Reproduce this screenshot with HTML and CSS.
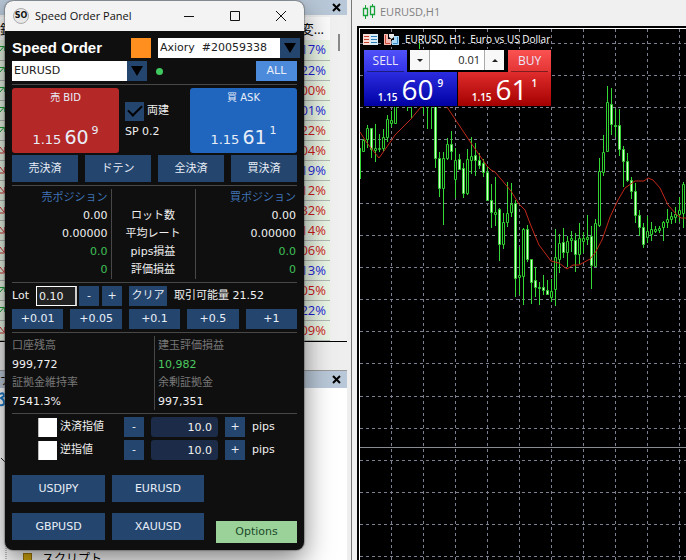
FILE: index.html
```
<!DOCTYPE html>
<html lang="ja">
<head>
<meta charset="utf-8">
<title>Speed Order Panel</title>
<link rel="stylesheet" href="styles.css">
</head>
<body>
<aside class="dock">
  <div class="dock-bar"><span></span><button class="dock-close" aria-label="閉じる"><svg width="9" height="9" viewBox="0 0 9 9"><path d="M1 1L8 8M8 1L1 8"/></svg></button></div>
  <div class="watch">
    <table class="quotes">
      <thead><tr><th class="sym">銘</th><th>変...</th></tr></thead>
      <tbody id="quotes"></tbody>
    </table>
    <div class="scroll"><i></i></div>
  </div>
  <div class="dock-gap"></div>
  <div class="dock-bar nav-bar"><span>ナ</span><button class="dock-close" aria-label="閉じる"><svg width="9" height="9" viewBox="0 0 9 9"><path d="M1 1L8 8M8 1L1 8"/></svg></button></div>
  <div class="tree">
    <svg class="tree-icon" width="5" height="16" viewBox="0 0 5 16"><path d="M0 3Q4 1 4 5L1 7Q5 9 4 13Q2 15 0 14" fill="none" stroke="#1878c8" stroke-width="2"/></svg>
    <svg class="tree-lines" width="8" height="150" viewBox="0 0 8 150"><path d="M1 46L5 50" stroke="#222" fill="none"/><path d="M6 88V150" stroke="#888" stroke-dasharray="1 1" fill="none"/></svg>
    <div class="tree-item"><span class="folder"></span>スクリプト</div>
  </div>
</aside>

<main class="chart-window">
  <header class="chart-title">
    <svg width="14" height="16" viewBox="0 0 14 16" fill="none" stroke="#17a33a"><path d="M3.500 1V4M3.500 12V15M10.500 0V2M10.500 11V14"/><path d="M1.500 4.500H5.500V11.500H1.500ZM8.500 2.500H12.500V10.500H8.500Z" stroke-width="1.300"/></svg>
    <span>EURUSD,H1</span>
  </header>
  <section class="chart">
    <svg class="plot" id="plot" width="100%" height="100%" aria-label="EURUSD H1"></svg>
    <div class="overlay">
      <div class="caption">
        <svg width="15" height="11" viewBox="0 0 15 11"><rect width="7" height="11" fill="#f7dcd5"/><rect x="7" width="8" height="11" fill="#d8ecf8"/><path d="M1 2.500H6M1 5.500H6M1 8.500H6" stroke="#c4402c"/><path d="M8 2.500H14M8 5.500H14M8 8.500H14" stroke="#2a7ab8"/></svg>
        <svg width="15" height="11" viewBox="0 0 15 11"><path d="M0 0H4V5H7V11H0Z" fill="#f4b8ae"/><path d="M1.500 1V9.500H6" stroke="#d04a3a" fill="none"/><path d="M10 2H15V11H8V6H10Z" fill="#a8d8f4"/><path d="M5 0H10V3L7.500 5L5 3Z" fill="#e8e8e8"/><path d="M13.500 3V9.500H9" stroke="#3a8ac8" fill="none"/></svg>
        <span>EURUSD, H1:&nbsp; Euro vs US Dollar</span>
      </div>
      <form class="trade">
        <button type="button" class="tab sell-tab">SELL</button>
        <div class="spin">
          <button type="button" aria-label="減らす"><i class="down"></i></button>
          <input type="text" value="0.01" aria-label="ロット">
          <button type="button" aria-label="増やす"><i class="up"></i></button>
        </div>
        <button type="button" class="tab buy-tab">BUY</button>
        <button type="button" class="quote sell-quote"><small>1.15</small><b>60</b><sup>9</sup></button>
        <button type="button" class="quote buy-quote"><small>1.15</small><b>61</b><sup>1</sup></button>
      </form>
    </div>
  </section>
</main>

<section class="window">
  <header class="titlebar">
    <span class="logo">SO</span>
    <h1>Speed Order Panel</h1>
    <button aria-label="最小化"><svg width="10" height="10" viewBox="0 0 10 10"><path d="M0 5.500H10"/></svg></button>
    <button aria-label="最大化"><svg width="10" height="10" viewBox="0 0 10 10"><path d="M.5 .5H9.500V9.500H.5Z"/></svg></button>
    <button aria-label="閉じる"><svg width="10" height="10" viewBox="0 0 10 10"><path d="M0 0L10 10M10 0L0 10"/></svg></button>
  </header>
  <form class="panel">
    <div class="row head">
      <h2>Speed Order</h2>
      <span class="swatch"></span>
      <div class="combo account"><select aria-label="口座"><option>Axiory &nbsp;#20059338</option></select></div>
    </div>
    <div class="row symbol-row">
      <div class="combo symbol"><select aria-label="通貨ペア"><option>EURUSD</option></select></div>
      <span class="dot"></span>
      <button type="button" class="all">ALL</button>
    </div>
    <hr>
    <div class="deal">
      <button type="button" class="price bid"><span>売 BID</span><span class="num"><small>1.15</small><b>60</b><sup>9</sup></span></button>
      <div class="deal-mid">
        <label><input type="checkbox" class="hedge" checked>両建</label>
        <span>SP 0.2</span>
      </div>
      <button type="button" class="price ask"><span>買 ASK</span><span class="num"><small>1.15</small><b>61</b><sup>1</sup></span></button>
    </div>
    <div class="grid4">
      <button type="button">売決済</button><button type="button">ドテン</button><button type="button">全決済</button><button type="button">買決済</button>
    </div>
    <hr>
    <table class="positions">
      <tr><th>売ポジション</th><td></td><th>買ポジション</th></tr>
      <tr><td>0.00</td><td>ロット数</td><td>0.00</td></tr>
      <tr><td>0.00000</td><td>平均レート</td><td>0.00000</td></tr>
      <tr class="gain"><td>0.0</td><td>pips損益</td><td>0.0</td></tr>
      <tr class="gain"><td>0</td><td>評価損益</td><td>0</td></tr>
    </table>
    <hr>
    <div class="row lot">
      <label for="lot">Lot</label>
      <input id="lot" type="text" value="0.10">
      <button type="button" class="step">-</button>
      <button type="button" class="step">+</button>
      <button type="button" class="clear">クリア</button>
      <span>取引可能量 21.52</span>
    </div>
    <div class="grid5">
      <button type="button">+0.01</button><button type="button">+0.05</button><button type="button">+0.1</button><button type="button">+0.5</button><button type="button">+1</button>
    </div>
    <hr>
    <div class="balance">
      <dl><dt>口座残高</dt><dd>999,772</dd><dt>証拠金維持率</dt><dd>7541.3%</dd></dl>
      <dl><dt>建玉評価損益</dt><dd class="up-text">10,982</dd><dt>余剰証拠金</dt><dd>997,351</dd></dl>
    </div>
    <hr>
    <div class="limits">
      <div class="row limit">
        <label><input type="checkbox" class="tick">決済指値</label>
        <button type="button" class="step">-</button>
        <input type="text" value="10.0" aria-label="決済指値 pips">
        <button type="button" class="step">+</button>
        <span>pips</span>
      </div>
      <div class="row limit">
        <label><input type="checkbox" class="tick">逆指値</label>
        <button type="button" class="step">-</button>
        <input type="text" value="10.0" aria-label="逆指値 pips">
        <button type="button" class="step">+</button>
        <span>pips</span>
      </div>
    </div>
    <div class="foot">
      <div class="pairs">
        <button type="button">USDJPY</button><button type="button">EURUSD</button>
        <button type="button">GBPUSD</button><button type="button">XAUUSD</button>
      </div>
      <button type="button" class="options">Options</button>
    </div>
  </form>
</section>
<script src="chart.js"></script>
</body>
</html>
```
FILE: styles.css
```
* { box-sizing: border-box; }
body {
  margin: 0;
  min-height: 100vh;
  display: flex;
  position: relative;
  overflow: hidden;
  background: #f0f0f0;
  font: 11px/18px "DejaVu Sans", "Noto Sans CJK JP", sans-serif;
}
button, input, select { font: inherit; color: inherit; margin: 0; padding: 0; border: 0; border-radius: 0; }
button { cursor: pointer; }
h1, h2, dl, dd { margin: 0; }

/* docked panes */
.dock {
  flex: 0 0 352px;
  height: 100vh;
  display: flex;
  flex-direction: column;
  padding-right: 4px;
  border-right: 1px solid #777;
  background: #eee;
  overflow: hidden;
  font: 13px/20px "Open Sans", "Noto Sans CJK JP", sans-serif;
}
.dock-bar {
  flex: none;
  height: 15px;
  display: flex;
  align-items: center;
  justify-content: space-between;
  padding-right: 6px;
  background: #b9c8d8;
}
.nav-bar { height: 18px; border-top: 1px solid #999; }
.dock-close { width: 9px; height: 9px; line-height: 0; background: none; }
.dock-close svg { stroke: #000; stroke-width: 2; display: block; }
.watch { display: flex; border-bottom: 1px solid #000; padding-top: 2px; }
.quotes { flex: 1; border-collapse: collapse; table-layout: fixed; background: #e8f4e4; }
.quotes th { height: 23px; padding: 0 6px 0 0; background: #fafafa; font-weight: 400; text-align: right; }
.quotes th.sym { padding: 0; text-align: left; }
.quotes td { height: 20px; line-height: 19px; padding: 0 4px 0 0; text-align: right; border-bottom: 1px solid #b4b8b4; }
.quotes td:first-child { padding: 0; text-align: left; line-height: 0; }
.quotes .blue { color: #1c1cd8; }
.quotes .red { color: #d01818; }
.scroll { flex: 0 0 17px; padding: 17px 0 0 8px; background: #f0f0f0; }
.scroll i { display: block; width: 2px; height: 17px; background: #888; }
.dock-gap { flex: 0 0 28px; }
.tree { flex: 1; display: flex; flex-direction: column; background: #fff; position: relative; }
.tree-icon { flex: none; margin-top: 3px; }
.tree-lines { position: absolute; left: 0; top: 24px; }
.tree-item { display: flex; align-items: center; gap: 10px; padding: 142px 0 0 23px; font-size: 12px; }
.folder { width: 9px; height: 11px; background: #d8ac10; border: 1px solid #a07808; }

/* chart window */
.chart-window { flex: 1; height: 100vh; min-width: 0; display: flex; flex-direction: column; padding-left: 5px; }
.chart-title {
  flex: 0 0 26px;
  display: flex;
  align-items: center;
  gap: 4px;
  padding: 0 0 2px 5px;
  color: #808080;
  font: 11px/18px "Open Sans", sans-serif;
}
.chart {
  flex: 1;
  position: relative;
  background: #000;
  border: 2px solid #000;
  border-width: 2px 0 0 2px;
  box-shadow: inset 1px 1px 0 #fff;
}
.plot { position: absolute; inset: 0; display: block; }
.overlay { position: absolute; left: 4px; top: 4px; }
.caption { display: flex; align-items: center; gap: 6px; height: 15px; color: #fff; font: 10px/15px "Open Sans", sans-serif; }
.caption svg { flex: none; }
.caption span { white-space: nowrap; }
.trade {
  display: grid;
  grid-template-columns: 43px 49px 49px 43px;
  grid-template-rows: 22px 34px;
  column-gap: 1px;
  margin-top: 2px;
  padding: 1px;
  background: #000;
  color: #fff;
  font-family: "Open Sans", sans-serif;
}
.spin { grid-column: 2 / 4; display: flex; height: 20px; margin: 0 3px 0 2px; background: #fff; color: #222; }
.spin button { width: 19px; background: #f8f8f8; display: grid; place-items: center; }
.spin input { flex: 1; min-width: 0; text-align: right; padding-right: 4px; border: solid #aaa; border-width: 0 1px; font-size: 11px; }
.spin i { border: 3px solid transparent; }
.spin .down { border-top-color: #222; border-bottom: 0; }
.spin .up { border-bottom-color: #222; border-top: 0; }
.tab { color: #e8e8f8; font-size: 12px; line-height: 20px; position: relative; }
.tab::after { content: ""; position: absolute; left: 3px; right: 3px; bottom: 0; height: 1px; background: rgba(0, 0, 0, .45); }
.sell-tab { background: linear-gradient(#5252fa, #3232e8); }
.buy-tab { background: linear-gradient(#fa5252, #e43434); }
.quote { display: flex; align-items: flex-end; justify-content: center; gap: 4px; height: 34px; color: #fff; }
.sell-quote { grid-column: 1 / 3; background: linear-gradient(#2c2ce0, #0000a4); }
.buy-quote { grid-column: 3 / 5; background: linear-gradient(#e02c2c, #a40000); }
.quote small { font-size: 10px; line-height: 18px; font-weight: 600; }
.quote b { font-size: 28px; line-height: 34px; font-weight: 400; }
.quote sup { font-size: 10px; line-height: 12px; font-weight: 600; align-self: flex-start; padding-top: 5px; }

/* order panel window */
.window {
  position: absolute;
  left: 5px;
  top: 1px;
  width: 299px;
  border-radius: 8px;
  overflow: hidden;
  background: #0f0f0f;
  color: #f0f0f0;
  box-shadow: 0 0 1px 1px rgba(90, 90, 90, .5), 0 10px 28px rgba(0, 0, 0, .5);
}
.titlebar { display: flex; align-items: center; height: 30px; padding-left: 8px; background: #f3f3f3; color: #111; }
.logo {
  width: 16px;
  height: 16px;
  border: 1px solid #aaa;
  border-radius: 50%;
  font: 700 8px/14px "DejaVu Sans", sans-serif;
  text-align: center;
  background: #e8e8e8;
}
.titlebar h1 { flex: 1; padding-left: 6px; font: 11px/18px "Open Sans", sans-serif; }
.titlebar button { width: 46px; height: 28px; background: none; line-height: 0; }
.titlebar svg { fill: none; stroke: #111; }
.panel { padding: 7px; }
.panel button { background: #24466e; color: #e8eef8; line-height: 20px; }
.row { display: flex; align-items: center; height: 20px; }
hr { height: 1px; margin: 3px 0; border: 0; background: #484848; }
.head { margin-right: -3px; }
.head h2 { flex: 1; font: 700 15px/20px "Liberation Sans", sans-serif; color: #fff; }
.swatch { width: 20px; height: 20px; margin-right: 7px; background: #ff8f1f; }
.combo { position: relative; display: flex; height: 20px; }
.combo select { width: 100%; height: 20px; padding: 0 20px 0 2px; appearance: none; background: linear-gradient(#24466e, #24466e) right / 20px 100% no-repeat #fff; color: #222; }
.combo::after { content: ""; position: absolute; right: 4px; top: 5px; border: 6px solid transparent; border-top: 10px solid #000; border-bottom: 0; pointer-events: none; }
.account { width: 142px; }
.symbol { width: 135px; }
.symbol-row { margin-top: 3px; }
.dot { width: 7px; height: 7px; margin-left: 9px; border-radius: 50%; background: #40c860; }
.panel .all { width: 41px; height: 20px; margin-left: auto; background: #4c8adb; }
.deal { display: flex; justify-content: space-between; height: 65px; }
.panel .price { width: 107px; border-radius: 3px; display: flex; flex-direction: column; align-items: center; justify-content: space-between; font-size: 10px; padding-bottom: 3px; }
.panel .bid { background: #b52828; }
.panel .ask { background: #2066be; }
.num { display: flex; align-items: flex-end; gap: 3px; line-height: 28px; }
.num small { font-size: 13px; line-height: 20px; }
.num b { font-size: 19px; line-height: 26px; font-weight: 400; }
.num sup { font-size: 11px; line-height: 14px; align-self: flex-start; }
.deal-mid { flex: 1; padding: 14px 0 0 6px; }
.deal-mid label { display: flex; align-items: center; gap: 3px; height: 18px; }
.deal-mid span { display: block; margin-top: 3px; }
.hedge { appearance: none; width: 19px; height: 19px; background: #24466e; display: grid; place-items: center; }
.hedge:checked::after { content: ""; width: 12px; height: 6px; margin-bottom: 4px; border: solid #000; border-width: 0 0 2px 2px; transform: rotate(-45deg); }
.grid4 { display: grid; grid-template-columns: repeat(4, 1fr); gap: 7px; margin-top: 2px; }
.grid4 button { height: 27px; }
.positions { width: 100%; border-collapse: collapse; table-layout: fixed; text-align: right; }
.positions th, .positions td { height: 18px; padding: 0; font-weight: 400; line-height: 18px; }
.positions th { color: #3f74b8; }
.positions td:first-child, .positions th:first-child { width: 99px; padding-right: 3px; border-right: 1px solid #484848; }
.positions td:nth-child(2) { width: 84px; text-align: center; border-right: 1px solid #484848; }
.positions td:last-child, .positions th:last-child { padding-right: 1px; }
.positions .gain td { color: #3fc058; }
.positions .gain td:nth-child(2) { color: #f0f0f0; }
.lot label { width: 24px; }
.lot input { width: 41px; height: 20px; padding-left: 2px; background: #222; border: 1px solid #fff; border-right: 2px solid #ccc; }
.step { width: 20px; height: 20px; }
.lot .step { margin-left: 2px; }
.lot .step + .step { margin-left: 3px; }
.clear { width: 38px; height: 20px; margin: 0 7px; }
.grid5 { display: grid; grid-template-columns: repeat(5, 1fr); gap: 7px; margin-top: 3px; }
.grid5 button { height: 20px; }
.balance { display: grid; grid-template-columns: 142fr 143fr; }
.balance dt { height: 18px; color: #777; line-height: 20px; }
.balance dd { height: 19px; line-height: 21px; }
.balance dl + dl { padding-left: 3px; border-left: 1px solid #484848; }
.balance .up-text { color: #4cc860; }
.limits { display: grid; gap: 3px; }
.limit label { display: flex; align-items: center; gap: 3px; width: 86px; margin-left: 26px; }
.tick { appearance: none; width: 19px; height: 19px; background: #fff; border: 1px solid #bbb; border-width: 0 0 0 1px; }
.limit input[type="text"] { width: 67px; height: 20px; margin: 0 7px; padding-right: 6px; border-radius: 3px; background: #1c2c48; text-align: right; }
.limit span { padding-left: 7px; }
.foot { display: flex; justify-content: space-between; align-items: flex-end; height: 68px; margin-top: 15px; }
.pairs { align-self: flex-start; display: grid; grid-template-columns: 93px 92px; gap: 11px 7px; }
.pairs button { height: 27px; }
.panel .options { width: 81px; height: 22px; background: #9ad29a; color: #1c4a28; }
```
FILE: chart.js
```
// Market watch rows: change text, text colour, arrow direction.
const quotes = [
  ["17%", "blue", 1], ["22%", "blue", 1], ["00%", "red", 1], ["01%", "blue", 1], ["22%", "red", 1],
  ["04%", "red", 0], ["19%", "blue", 0], ["12%", "red", 0], ["32%", "red", 0], ["14%", "red", 0],
  ["06%", "red", 0], ["13%", "blue", 0], ["05%", "red", 1], ["22%", "blue", 1], ["09%", "red", 0]
];
document.getElementById("quotes").innerHTML = quotes.map(([v, c, up]) =>
  `<tr><td><svg width="6" height="9" viewBox="0 0 6 9" fill="none" stroke="${up ? "#18a038" : "#c83030"}"><path d="${up ? "M0 6L4 1.500M0 1.500H4.500V6" : "M0 1L4 6M4.500 1V7H0"}"/></svg></td><td class="${c}">${v}</td></tr>`
).join("");

// Candles every 4px: high, low, body top, body bottom, 1 = falling. Levels are thirds of a pixel.
const candles = [
  [205,297,205,297,0],[178,214,180,214,0],[136,205,145,178,0],[145,235,145,207,1],[133,245,205,210,0],[162,216,203,208,0],
  [147,214,170,203,0],[106,185,118,172,0],[94,140,120,130,0],[20,130,30,128,0],[10,60,20,40,0],[0,70,20,50,1],
  [10,92,30,60,0],[20,114,30,60,1],[0,60,10,40,0],[-114,30,-20,10,0],[10,103,30,60,1],
  [20,148,30,70,1],[20,148,30,70,0],[40,265,50,235,1],[217,350,235,325,1],[217,434,235,323,0],[175,240,193,235,0],
  [153,240,193,213,1],[205,353,240,298,0],[223,270,237,267,1],[250,355,265,338,1],[207,345,237,338,0],[172,282,228,240,0],
  [190,288,226,241,1],[218,268,241,255,1],[238,292,250,275,1],[262,362,275,360,1],[313,443,360,395,1],[292,438,397,401,0],
  [385,543,387,493,1],[398,508,427,493,0],[305,440,400,427,0],[310,410,373,397,0],[360,650,370,595,1],[500,645,586,592,0],
  [445,674,447,587,0],[436,545,447,538,1],[536,672,536,605,1],[560,650,600,620,1],[605,675,620,623,1],[585,645,622,631,1],
  [600,645,631,641,1],[598,665,634,650,0],[447,677,532,628,0],[462,580,490,538,0],[443,535,487,515,1],[468,560,484,515,0],
  [452,515,475,480,0],[460,575,480,521,1],[430,552,475,523,0],[456,520,475,482,0],[405,495,470,478,0],[438,627,468,555,1],
  [417,560,430,557,0],[234,440,274,435,0],[165,287,216,277,0],[18,215,67,213,0],[24,165,73,133,1],[88,172,134,137,1],
  [86,228,136,208,1],[198,320,208,244,1],[220,305,244,299,1],[290,357,299,334,1],[310,430,334,406,1],[390,467,406,440,1],
  [430,503,442,491,1],[407,490,454,470,0],[427,482,448,462,0],[437,458,446,452,0],[437,460,443,450,0],[422,482,427,442,0],
  [388,445,418,427,0],[397,432,408,418,0],[380,430,402,410,0],[350,425,391,402,0],[306,443,313,400,0]
];
// Moving average, same scale on both axes.
const average = [
  [0,155],[20,190],[58,234],[94,183],[106,165],[154,117],[180,85],[220,60],[260,80],[286,117],[334,188],[382,258],[394,270],[406,276],
  [454,333],[478,372],[494,390],[514,438],[538,495],[574,543],[598,550],[622,566],[640,555],[658,555],[690,538],[706,520],
  [726,480],[750,410],[774,360],[796,325],[826,302],[852,302],[865,295],[880,300],[900,325],[925,375],[950,405],[962,415],[1200,415]
];
const top0 = 52;
const y = v => top0 + Math.round(v / 3);
let grid = "", wicks = "", rising = "", falling = "";
for (let x = 32; x < 3000; x += 32) grid += `M${x}.5 1V3000`;
for (let r = 15; r < 3000; r += 32) grid += `M1 ${r + (r > 350 ? 1 : 0)}.5H3000`;
candles.forEach(([h, l, t, b, f], i) => {
  const x = i * 4;
  wicks += `M${x}.5 ${y(h)}V${y(t)}M${x}.5 ${y(b)}V${y(l)}`;
  const box = `M${x - 1}.5 ${y(t)}.5H${x + 1}.5V${Math.max(y(b), y(t) + 1)}.5H${x - 1}.5Z`;
  if (i === 0) wicks += `M1.5 ${y(t)}V${y(b)}`;
  else if (f) falling += box;
  else rising += box;
});
document.getElementById("plot").innerHTML = `
  <path d="${grid}" fill="none" stroke="#7c8090" stroke-dasharray="3 3"/>
  <path d="M1 419.500H3000" stroke="#8a8c94"/>
  <path d="${wicks}" stroke="#34d834" fill="none"/>
  <path d="${rising}" stroke="#30d030" fill="#000"/>
  <path d="${falling}" stroke="#34d034" fill="#d8ffd0"/>
  <polyline points="${average.map(([a, b]) => `${Math.round(a / 3) + 1},${y(b)}`).join(" ")}" fill="none" stroke="#c02818"/>`;
```
